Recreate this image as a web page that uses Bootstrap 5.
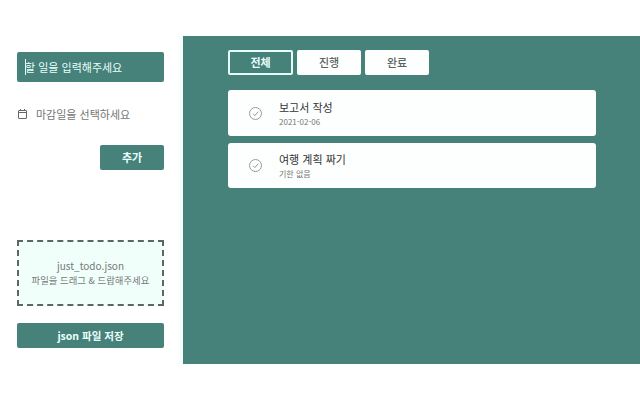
<!DOCTYPE html>
<html lang="ko">
<head>
<meta charset="utf-8">
<title>Just Todo</title>
<link href="https://cdn.jsdelivr.net/npm/bootstrap@5.3.0/dist/css/bootstrap.min.css" rel="stylesheet">
<style>
html,body{height:400px;overflow:hidden;background:#fff;font-family:"Noto Sans CJK KR","Noto Sans",sans-serif}
.shell{height:400px;padding:36px 0}
.shell-row{height:328px}
.side{width:183px;padding:16px 19px 0 17px;background:#fff;box-shadow:inset -6px 0 6px -4px #f0fbf8}
.main-pane{background:#46817a;padding:14px 44px 0 45px}
.todo-input{height:30px;background:#46817a;border-radius:2px;color:#eafffa;font-size:11px;line-height:30px;padding-left:8px;position:relative}
.todo-input::before{content:"";position:absolute;left:8px;top:7px;width:1px;height:16px;background:#e8fffa}
.date-row{margin-top:24px;height:16px;color:#757575;font-size:11px;gap:9px;padding-left:1px}
.date-row svg{width:9px;height:10px;flex:none}
.add-btn{width:64px;height:25px;margin-top:23px;background:#46817a;border:0;border-radius:2px;color:#eafffa;font-size:11px;font-weight:700;padding:0}
.drop-box{height:66px;margin-top:70px;background:#f1fffb;border:2px dashed #5c6664;color:#757a79;font-size:9.4px;line-height:15px}
.drop-name{font-size:10px}
.save-btn{height:25px;margin-top:17px;background:#46817a;border:0;border-radius:2px;color:#eafffa;font-size:10.5px;font-weight:700;padding:0}
.tab-btn{width:64px;height:25px;background:#fdffff;border:0;border-radius:2px;color:#5a6361;font-size:11px;font-weight:500;padding:0}
.tab-btn.on{width:65px;background:#46817a;border:2px solid #e6fffa;color:#eafffa;font-weight:700}
.tabs{gap:4px;margin-bottom:15px}
.todo-card{height:46px;background:#fdffff;border-radius:3px;padding-left:21px;margin-bottom:7px;gap:17px}
.todo-card+.todo-card{height:45px}
.todo-card svg{width:13px;height:13px;flex:none}
.todo-title{font-size:11px;line-height:15px;color:#333}
.todo-sub{font-size:8px;line-height:11px;color:#757575;margin-top:1px}
</style>
</head>
<body>
<div class="shell">
  <div class="d-flex shell-row">
    <aside class="side flex-shrink-0">
      <div class="todo-input">할 일을 입력해주세요</div>
      <div class="date-row d-flex align-items-center">
        <svg viewBox="0 0 9 10" fill="none" stroke="#666" stroke-width="1"><rect x=".5" y="1.5" width="8" height="8" rx=".5"/><path d="M.5 3.5h8M2.5 0v2M6.5 0v2"/></svg>
        <span>마감일을 선택하세요</span>
      </div>
      <div class="d-flex justify-content-end"><button class="add-btn" type="button">추가</button></div>
      <div class="drop-box d-flex flex-column align-items-center justify-content-center text-center">
        <div class="drop-name">just_todo.json</div>
        <div>파일을 드래그 &amp; 드랍해주세요</div>
      </div>
      <button class="save-btn w-100 d-block" type="button">json 파일 저장</button>
    </aside>
    <main class="main-pane flex-grow-1">
      <div class="tabs d-flex">
        <button class="tab-btn on" type="button">전체</button>
        <button class="tab-btn" type="button">진행</button>
        <button class="tab-btn" type="button">완료</button>
      </div>
      <div class="todo-card d-flex align-items-center">
        <svg viewBox="0 0 13 13" fill="none" stroke="#9a9a9a" stroke-width="1"><circle cx="6.5" cy="6.5" r="6"/><path d="M4 6.7l1.9 1.9L9.3 4.6"/></svg>
        <div><div class="todo-title">보고서 작성</div><div class="todo-sub">2021-02-06</div></div>
      </div>
      <div class="todo-card d-flex align-items-center">
        <svg viewBox="0 0 13 13" fill="none" stroke="#9a9a9a" stroke-width="1"><circle cx="6.5" cy="6.5" r="6"/><path d="M4 6.7l1.9 1.9L9.3 4.6"/></svg>
        <div><div class="todo-title">여행 계획 짜기</div><div class="todo-sub">기한 없음</div></div>
      </div>
    </main>
  </div>
</div>
<script src="https://cdn.jsdelivr.net/npm/bootstrap@5.3.0/dist/js/bootstrap.bundle.min.js"></script>
</body>
</html>
